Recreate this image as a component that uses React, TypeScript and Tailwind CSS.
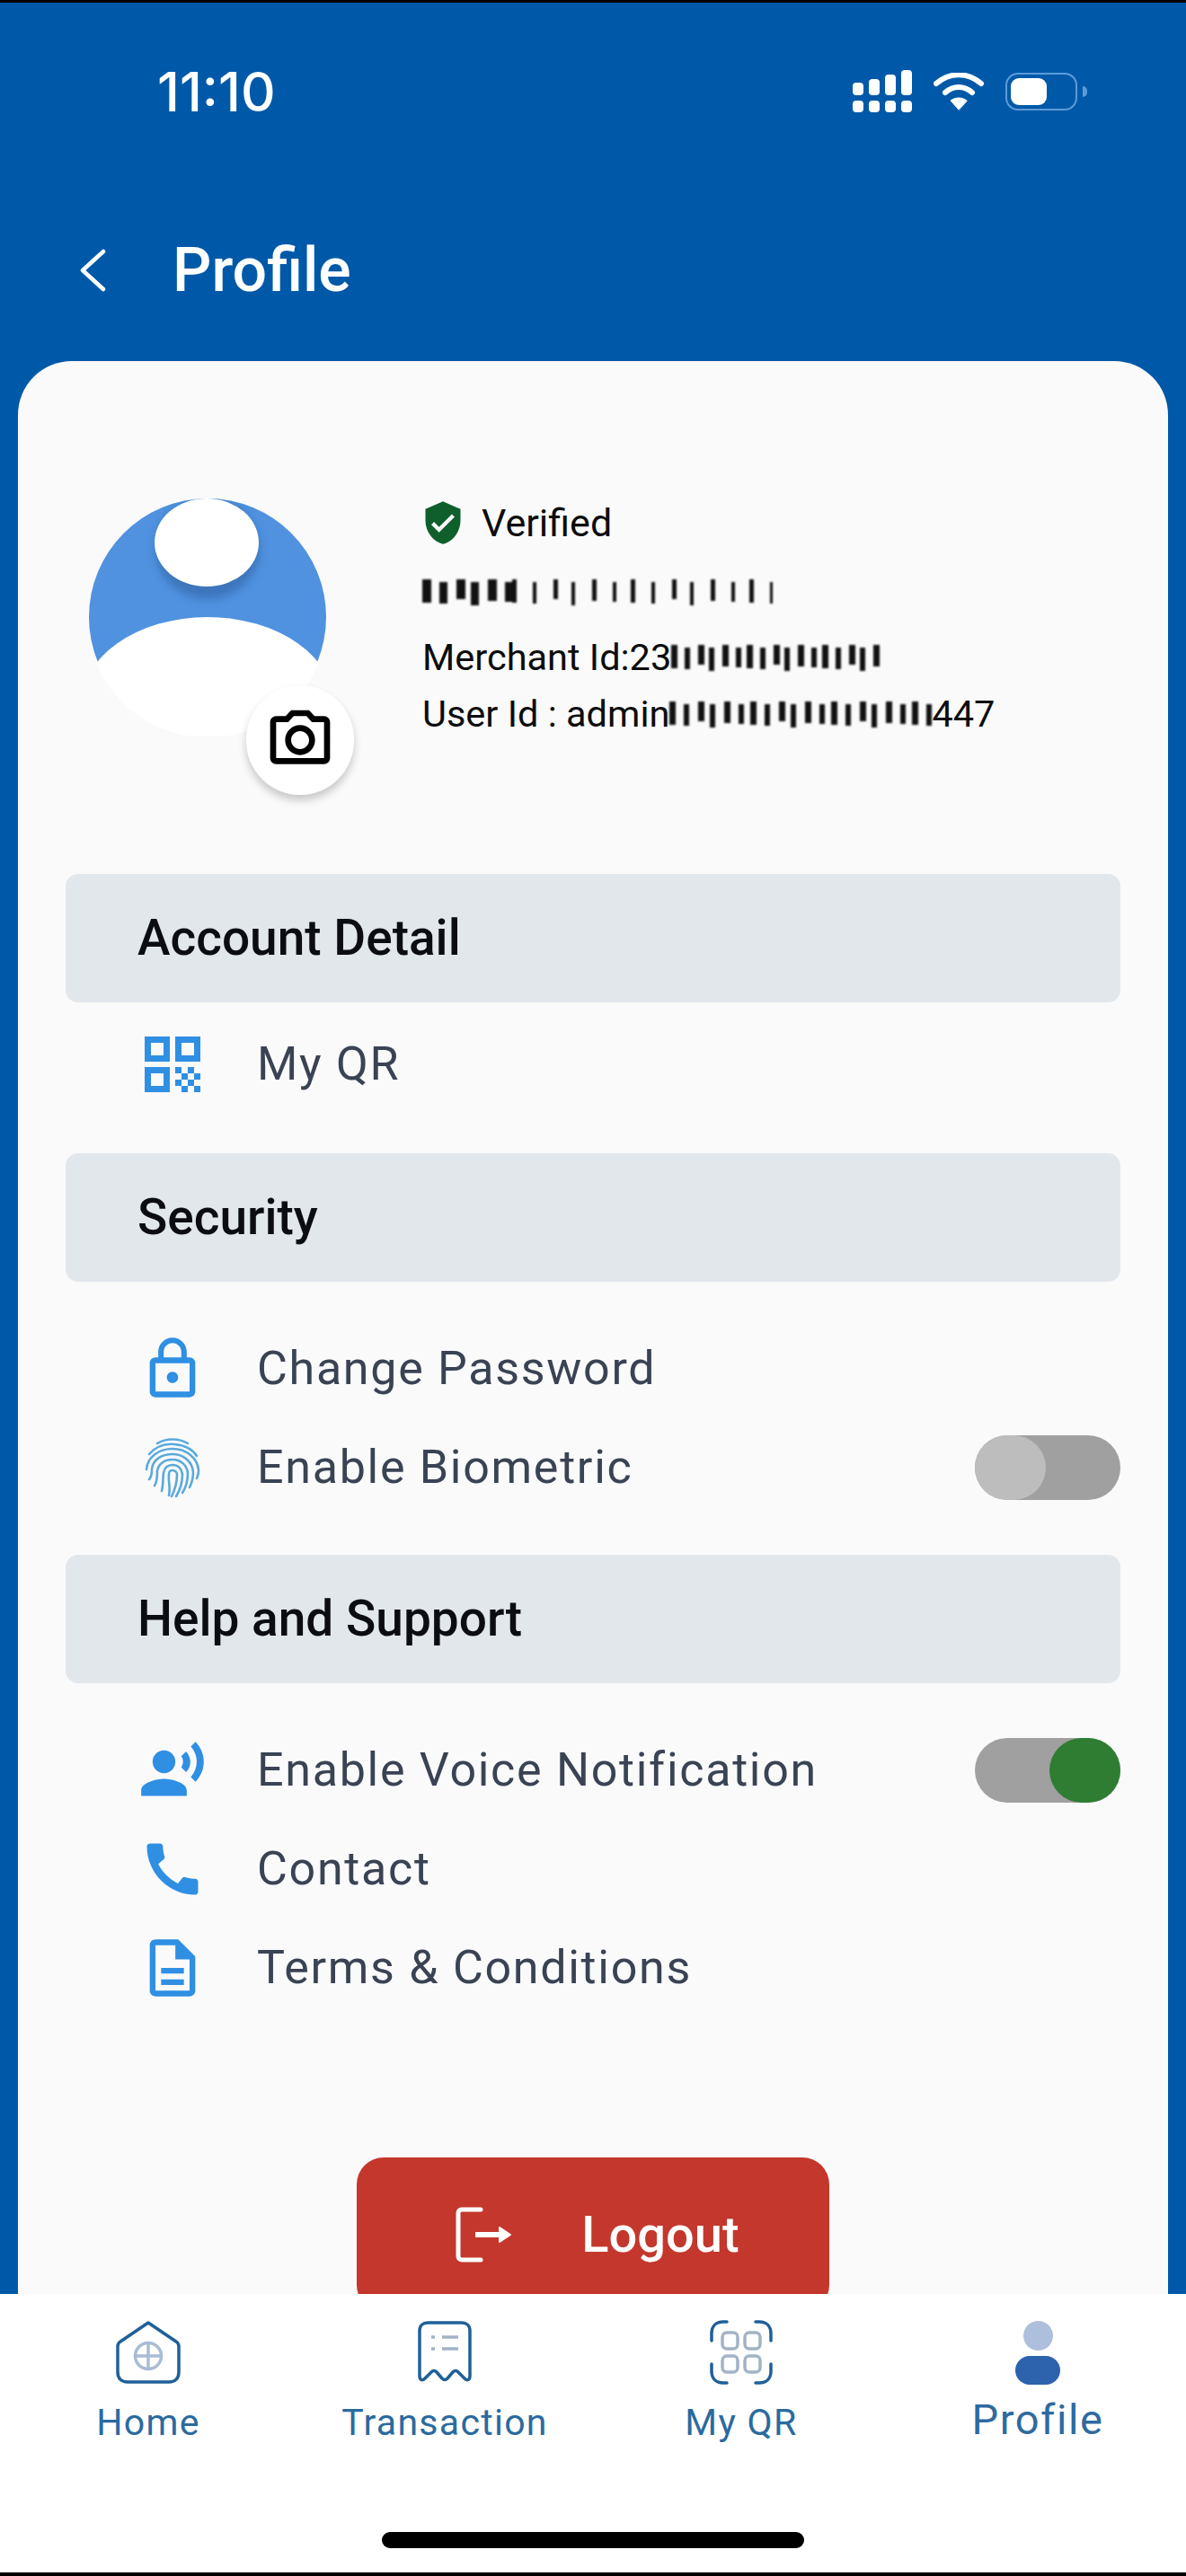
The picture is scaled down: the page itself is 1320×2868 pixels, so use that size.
import { ReactNode } from "react";
import { MdCall, MdLockOutline, MdOutlineDescription, MdOutlinePhotoCamera, MdRecordVoiceOver, MdVerifiedUser } from "react-icons/md";

const BLUE = "text-[#2f8fe3]";

function QrGlyph() {
  const checks = [[0, 0], [2, 0], [1, 1], [3, 1], [0, 2], [2, 2], [1, 3], [3, 3]];
  return (
    <svg width="62" height="62" viewBox="0 0 62 62" fill="none" className="text-[#2f8fe3]">
      <rect x="3.5" y="3.5" width="21" height="21" stroke="currentColor" strokeWidth="7" />
      <rect x="37.5" y="3.5" width="21" height="21" stroke="currentColor" strokeWidth="7" />
      <rect x="3.5" y="37.5" width="21" height="21" stroke="currentColor" strokeWidth="7" />
      {checks.map(([c, r]) => (
        <rect key={`${c}-${r}`} x={34 + c * 7} y={34 + r * 7} width="7" height="7" fill="currentColor" />
      ))}
    </svg>
  );
}

function FingerprintGlyph() {
  return (
    <svg width="62" height="68" viewBox="0 0 62 68" fill="none" stroke="#5aa9dc" strokeWidth="2.6" strokeLinecap="round">
      <path d="M14 7C24 1 38 1 48 7" />
      <path d="M5 19C13 10 23 7 33 8C44 9 53 13 58 21" />
      <path d="M2 36C3 22 16 13 31 13C46 13 59 23 60 37C60 41 59 44 58 46" />
      <path d="M5 47C8 44 8 40 8 36C9 25 19 19 31 19C43 19 53 27 54 39C54 45 53 50 50 56" />
      <path d="M11 54C14 50 14 44 14 38C15 30 22 25 31 25C40 25 47 31 48 40C48 48 46 56 42 62" />
      <path d="M19 60C21 53 20 46 21 40C22 34 25 31 31 31C37 31 41 35 42 41C42 50 40 58 35 66" />
      <path d="M27 65C29 56 26 48 27 42C27 38 28 37 31 37C34 37 36 39 36 42C36 50 34 58 30 66" />
    </svg>
  );
}

function Redacted({ width, marks }: { width: number; marks: [number, number, number, number][] }) {
  // Hand-scribbled bars hiding account numbers
  return (
    <svg width={width} height="34" viewBox={`0 0 ${width} 34`} className="shrink-0 blur-[0.8px]">
      {marks.map(([x, y, w, h], i) => (
        <rect key={i} x={x} y={y} width={w} height={h} fill="#111" />
      ))}
    </svg>
  );
}

function barRun(count: number, step: number, w = 5): [number, number, number, number][] {
  return Array.from({ length: count }, (_, i) => [i * step + (i % 3), 3 + (i % 2) * 3, w - (i % 2), 26 - (i % 3) * 2]);
}

function AvatarArt() {
  return (
    <svg width="264" height="264" viewBox="0 0 264 264">
      <defs>
        <clipPath id="disc">
          <circle cx="132" cy="132" r="132" />
        </clipPath>
        <clipPath id="discWide">
          <circle cx="132" cy="132" r="134" />
        </clipPath>
        <filter id="soft" x="-30%" y="-30%" width="160%" height="160%">
          <feGaussianBlur stdDeviation="5" />
        </filter>
      </defs>
      <circle cx="132" cy="132" r="132" fill="#5092e0" />
      <g clipPath="url(#disc)">
        <ellipse cx="132" cy="56" rx="58" ry="56" fill="#2f5f9e" opacity="0.55" filter="url(#soft)" />
      </g>
      <ellipse cx="131" cy="49" rx="58" ry="49" fill="#ffffff" />
      <g clipPath="url(#discWide)">
        <ellipse cx="132" cy="232" rx="142" ry="100" fill="#ffffff" />
        <rect x="0" y="225" width="264" height="40" fill="#ffffff" />
      </g>
    </svg>
  );
}

function Toggle({ on }: { on?: boolean }) {
  return (
    <div className={`flex h-[72px] w-[162px] rounded-full bg-[#a0a0a0] ${on ? "justify-end" : "justify-start"}`}>
      <div className={`h-[72px] w-[79px] rounded-full ${on ? "bg-[#2e7d32]" : "bg-[#bdbdbd]"}`} />
    </div>
  );
}

function SectionHeader({ title }: { title: string }) {
  return (
    <div className="flex h-[143px] items-center rounded-[14px] bg-[#e2e7ec] pl-[80px]">
      <span className="text-[55px] font-medium text-[#0b0d12]">{title}</span>
    </div>
  );
}

function Row({ icon, label, toggle }: { icon: ReactNode; label: string; toggle?: ReactNode }) {
  return (
    <div className="flex h-[110px] items-center pl-[81px]">
      <div className="flex w-[76px] items-center justify-center">{icon}</div>
      <span className="ml-[56px] flex-1 text-[52px] leading-none tracking-[1.7px] text-[#3a4354]">{label}</span>
      {toggle}
    </div>
  );
}

function HomeGlyph() {
  return (
    <svg width="72" height="72" viewBox="0 0 72 72" fill="none">
      <path d="M36 3L67 24C69 25 70 27 70 30V58C70 65 66 69 59 69H13C6 69 2 65 2 58V30C2 27 3 25 5 24Z" stroke="#1f6098" strokeWidth="3.5" strokeLinejoin="round" />
      <circle cx="36" cy="40" r="14.5" stroke="#a9bcd3" strokeWidth="3.5" />
      <path d="M21 40H51M36 25V55" stroke="#a9bcd3" strokeWidth="3.5" />
    </svg>
  );
}

function ReceiptGlyph() {
  return (
    <svg width="62" height="72" viewBox="0 0 62 72" fill="none">
      <path d="M3 62V12C3 6 7 3 12 3H50C55 3 59 6 59 12V62C59 67 56 68 53 65L46 58C44 56 42 56 40 58L34 65C32 67 30 67 28 65L22 58C20 56 18 56 16 58L9 65C6 68 3 67 3 62Z" stroke="#1f6098" strokeWidth="3.5" strokeLinejoin="round" />
      <path d="M28 19H46M28 32H46" stroke="#a3b3c6" strokeWidth="3.5" />
      <path d="M16 19H20M16 32H20" stroke="#a3b3c6" strokeWidth="3.5" />
    </svg>
  );
}

function ScanGlyph() {
  return (
    <svg width="72" height="74" viewBox="0 0 72 74" fill="none">
      <path d="M20 3H16C8 3 3 8 3 16V24M52 3H56C64 3 69 8 69 16V24M20 71H16C8 71 3 66 3 58V50M52 71H56C64 71 69 66 69 58V50" stroke="#1f6098" strokeWidth="3.5" strokeLinecap="round" />
      <rect x="15" y="15" width="17" height="18" rx="5" stroke="#a3b3c6" strokeWidth="3.5" />
      <rect x="40" y="15" width="17" height="18" rx="5" stroke="#a3b3c6" strokeWidth="3.5" />
      <rect x="15" y="41" width="17" height="18" rx="5" stroke="#a3b3c6" strokeWidth="3.5" />
      <rect x="40" y="41" width="17" height="18" rx="5" stroke="#a3b3c6" strokeWidth="3.5" />
    </svg>
  );
}

function TabItem({ icon, label, active }: { icon: ReactNode; label: string; active?: boolean }) {
  return (
    <div className="flex flex-col items-center">
      <div className="flex h-[74px] items-center justify-center">{icon}</div>
      <span className={active ? "mt-[14px] text-[47px] leading-[48px] tracking-[1.6px] text-[#2f6a9f]" : "mt-[19px] text-[41px] leading-[44px] tracking-[1.3px] text-[#2a6a9f]"}>{label}</span>
    </div>
  );
}

export default function App() {
  return (
    <div className="flex h-[2868px] w-[1320px] flex-col bg-black pt-[3px] pb-[4px] font-['Roboto',sans-serif]">
      <div className="flex min-h-0 flex-1 flex-col bg-[#0059a8]">
        {/* Status bar */}
        <div className="flex h-[198px] shrink-0 items-center justify-between pr-[110px] pl-[175px]">
          <span className="font-['Inter',sans-serif] text-[60px] font-medium text-white">11:10</span>
          <div className="flex items-center gap-[24px]">
            <svg width="66" height="48" viewBox="0 0 66 48" fill="white">
              <rect x="0" y="14" width="12" height="14" rx="4" />
              <rect x="18" y="10" width="12" height="18" rx="4" />
              <rect x="36" y="5" width="12" height="23" rx="4" />
              <rect x="54" y="0" width="12" height="28" rx="4" />
              <rect x="0" y="34" width="12" height="13" rx="4" />
              <rect x="18" y="34" width="12" height="13" rx="4" />
              <rect x="36" y="34" width="12" height="13" rx="4" />
              <rect x="54" y="34" width="12" height="13" rx="4" />
            </svg>
            <svg width="56" height="42" viewBox="0 0 56 42" fill="none" stroke="white" strokeLinecap="round">
              <path d="M3 12C18 -1 38 -1 53 12" strokeWidth="6" />
              <path d="M13 22C22 14 34 14 43 22" strokeWidth="6" />
              <path d="M28 41L19 31C24 27 32 27 37 31Z" fill="white" stroke="white" strokeWidth="1" strokeLinejoin="round" />
            </svg>
            <div className="flex items-center gap-[6px]">
              <div className="flex h-[42px] w-[80px] items-center rounded-[14px] border-2 border-[#5c9bd8] p-[4px]">
                <div className="h-[30px] w-[40px] rounded-[9px] bg-white" />
              </div>
              <div className="h-[12px] w-[5px] rounded-r-full bg-[#5c9bd8]" />
            </div>
          </div>
        </div>

        {/* Page title */}
        <div className="flex h-[201px] shrink-0 items-center pb-[2px] pl-[88px]">
          <svg width="30" height="48" viewBox="0 0 30 48" fill="none" stroke="white" strokeWidth="4.5" strokeLinecap="round" strokeLinejoin="round">
            <path d="M27 3L4 24L27 45" />
          </svg>
          <span className="ml-[74px] text-[68px] font-medium text-white">Profile</span>
        </div>

        {/* Sheet */}
        <div className="mx-[20px] min-h-0 flex-1 overflow-hidden rounded-t-[60px] bg-[#fafafa] px-[53px] pt-[153px]">
          <div className="flex h-[418px] items-start pl-[26px]">
            <div className="relative h-[264px] w-[264px] shrink-0">
              <AvatarArt />
              <div className="absolute top-[208px] left-[175px] flex h-[122px] w-[120px] items-center justify-center rounded-full bg-white shadow-[0_6px_10px_rgba(0,0,0,0.2)]">
                <MdOutlinePhotoCamera size={80} className="text-black" />
              </div>
            </div>
            <div className="ml-[107px] flex flex-col pt-[2px] text-[41.5px] leading-[48px] text-[#0d0d0d]">
              <div className="flex h-[50px] items-center">
                <MdVerifiedUser size={52} className="-ml-[3px] text-[#0f5f2c]" />
                <span className="ml-[17px] text-[43px]">Verified</span>
              </div>
              <div className="mt-[35px] h-[40px]">
                <Redacted width={390} marks={[...barRun(6, 18, 10), ...barRun(14, 22).map(([x, y, w, h]) => [x + 100, y, w, h] as [number, number, number, number])]} />
              </div>
              <div className="mt-[26px] flex h-[48px] items-center">
                <span>Merchant Id:23</span>
                <Redacted width={236} marks={barRun(17, 14, 7)} />
              </div>
              <div className="mt-[15px] flex h-[48px] items-center">
                <span>User Id : admin</span>
                <Redacted width={292} marks={barRun(20, 15, 7)} />
                <span>447</span>
              </div>
            </div>
          </div>

          <SectionHeader title="Account Detail" />
          <div className="mt-[14px] mb-[44px]">
            <Row icon={<QrGlyph />} label="My QR" />
          </div>

          <SectionHeader title="Security" />
          <div className="mt-[42px] mb-[42px]">
            <Row icon={<MdLockOutline size={88} className={BLUE} />} label="Change Password" />
            <Row icon={<FingerprintGlyph />} label="Enable Biometric" toggle={<Toggle />} />
          </div>

          <SectionHeader title="Help and Support" />
          <div className="mt-[42px]">
            <Row icon={<MdRecordVoiceOver size={88} className={BLUE} />} label="Enable Voice Notification" toggle={<Toggle on />} />
            <Row icon={<MdCall size={92} className={BLUE} />} label="Contact" />
            <Row icon={<MdOutlineDescription size={86} className={BLUE} />} label="Terms & Conditions" />
          </div>

          <div className="mx-auto mt-[156px] flex h-[172px] w-[526px] items-center justify-center rounded-[30px] bg-[#c4372c] pl-[10px]">
            <svg width="64" height="62" viewBox="0 0 64 62" fill="none" stroke="white" strokeLinejoin="round">
              <path d="M28 3H7C4 3 3 5 3 7V55C3 57 4 59 7 59H28" strokeWidth="5" strokeLinecap="round" />
              <path d="M22 31H50" strokeWidth="6" />
              <path d="M49 23L61 31L49 39Z" fill="white" strokeWidth="2" />
            </svg>
            <span className="ml-[76px] text-[56px] font-medium text-white">Logout</span>
          </div>
        </div>

        {/* Bottom navigation */}
        <div className="flex h-[310px] shrink-0 flex-col bg-white pt-[28px]">
          <div className="grid grid-cols-4">
            <TabItem icon={<HomeGlyph />} label="Home" />
            <TabItem icon={<ReceiptGlyph />} label="Transaction" />
            <TabItem icon={<ScanGlyph />} label="My QR" />
            <TabItem
              active
              label="Profile"
              icon={
                <div className="flex flex-col items-center gap-[6px]">
                  <div className="h-[33px] w-[33px] rounded-full bg-[#aebfdd]" />
                  <div className="h-[32px] w-[50px] rounded-full bg-[#2d62ad]" />
                </div>
              }
            />
          </div>
          <div className="mx-auto mt-auto mb-[27px] h-[18px] w-[470px] rounded-full bg-black" />
        </div>
      </div>
    </div>
  );
}
